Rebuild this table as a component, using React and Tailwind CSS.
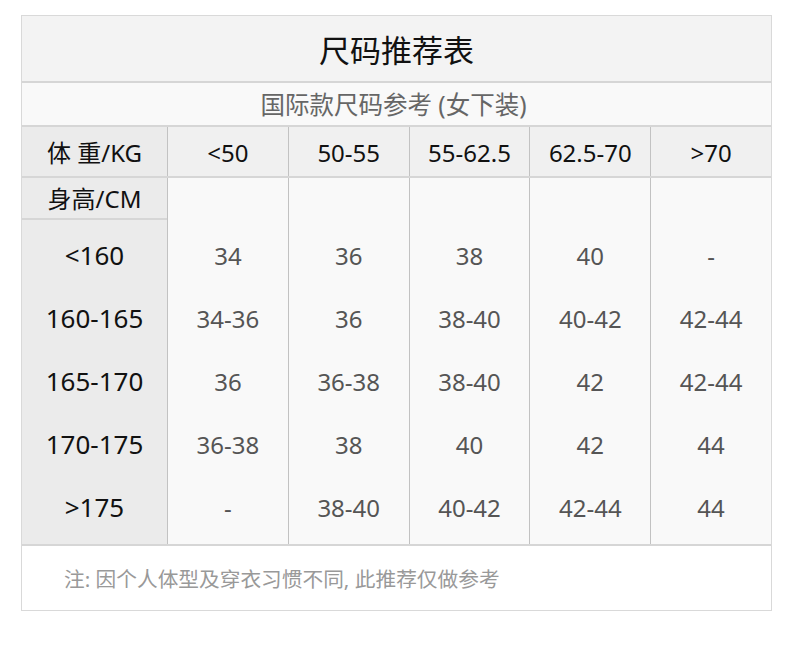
const weights = ["<50", "50-55", "55-62.5", "62.5-70", ">70"];

const rows = [
  { h: "<160", sizes: ["34", "36", "38", "40", "-"] },
  { h: "160-165", sizes: ["34-36", "36", "38-40", "40-42", "42-44"] },
  { h: "165-170", sizes: ["36", "36-38", "38-40", "42", "42-44"] },
  { h: "170-175", sizes: ["36-38", "38", "40", "42", "44"] },
  { h: ">175", sizes: ["-", "38-40", "40-42", "42-44", "44"] },
];

export default function App() {
  return (
    <main
      className="min-h-screen bg-white pl-[21px] pt-[15px]"
      style={{ fontFamily: '"Noto Sans", "Noto Sans CJK SC", sans-serif' }}
    >
      <div className="w-[751px] border border-[#d9d9d9]">
        <div className="flex h-[67px] items-center justify-center border-b-2 border-[#d6d6d6] bg-[#f3f3f3] pt-[3px] text-[31px] text-[#111]">
          尺码推荐表
        </div>
        <div className="flex h-[44px] items-center justify-center border-b-2 border-[#d6d6d6] bg-[#f9f9f9] pr-[6px] pt-[3px] text-[24.5px] text-[#666]">
          国际款尺码参考 (女下装)
        </div>

        <div className="flex h-[51px] border-b-2 border-[#d6d6d6] bg-[#f0f0f0] text-[24px] text-[#111]">
          <div className="flex w-[145px] items-center justify-center bg-[#ebebeb] pt-[3px]">体 重/KG</div>
          {weights.map((w) => (
            <div key={w} className="flex flex-1 items-center justify-center border-l border-[#c2c2c2] pt-[3px]">
              {w}
            </div>
          ))}
        </div>

        <div className="flex">
          <div className="w-[145px] bg-[#ebebeb] text-[#111]">
            <div className="flex h-[42px] items-center justify-center border-b-2 border-[#d6d6d6] pt-[2px] text-[24px]">
              身高/CM
            </div>
            <div className="pb-[5px] pt-[4px]">
              {rows.map((r) => (
                <div key={r.h} className="flex h-[63px] items-center justify-center text-[26px]">
                  {r.h}
                </div>
              ))}
            </div>
          </div>
          {weights.map((w, i) => (
            <div key={w} className="flex-1 border-l border-[#c2c2c2] bg-[#f9f9f9] text-[24px] text-[#555]">
              <div className="h-[42px]" />
              <div className="pb-[5px] pt-[4px]">
                {rows.map((r) => (
                  <div key={r.h} className="flex h-[63px] items-center justify-center">
                    {r.sizes[i]}
                  </div>
                ))}
              </div>
            </div>
          ))}
        </div>

        <div className="flex h-[66px] items-center border-t-2 border-[#d6d6d6] bg-white pl-[42px] pt-[3px] text-[20.7px] text-[#999]">
          注: 因个人体型及穿衣习惯不同, 此推荐仅做参考
        </div>
      </div>
    </main>
  );
}
